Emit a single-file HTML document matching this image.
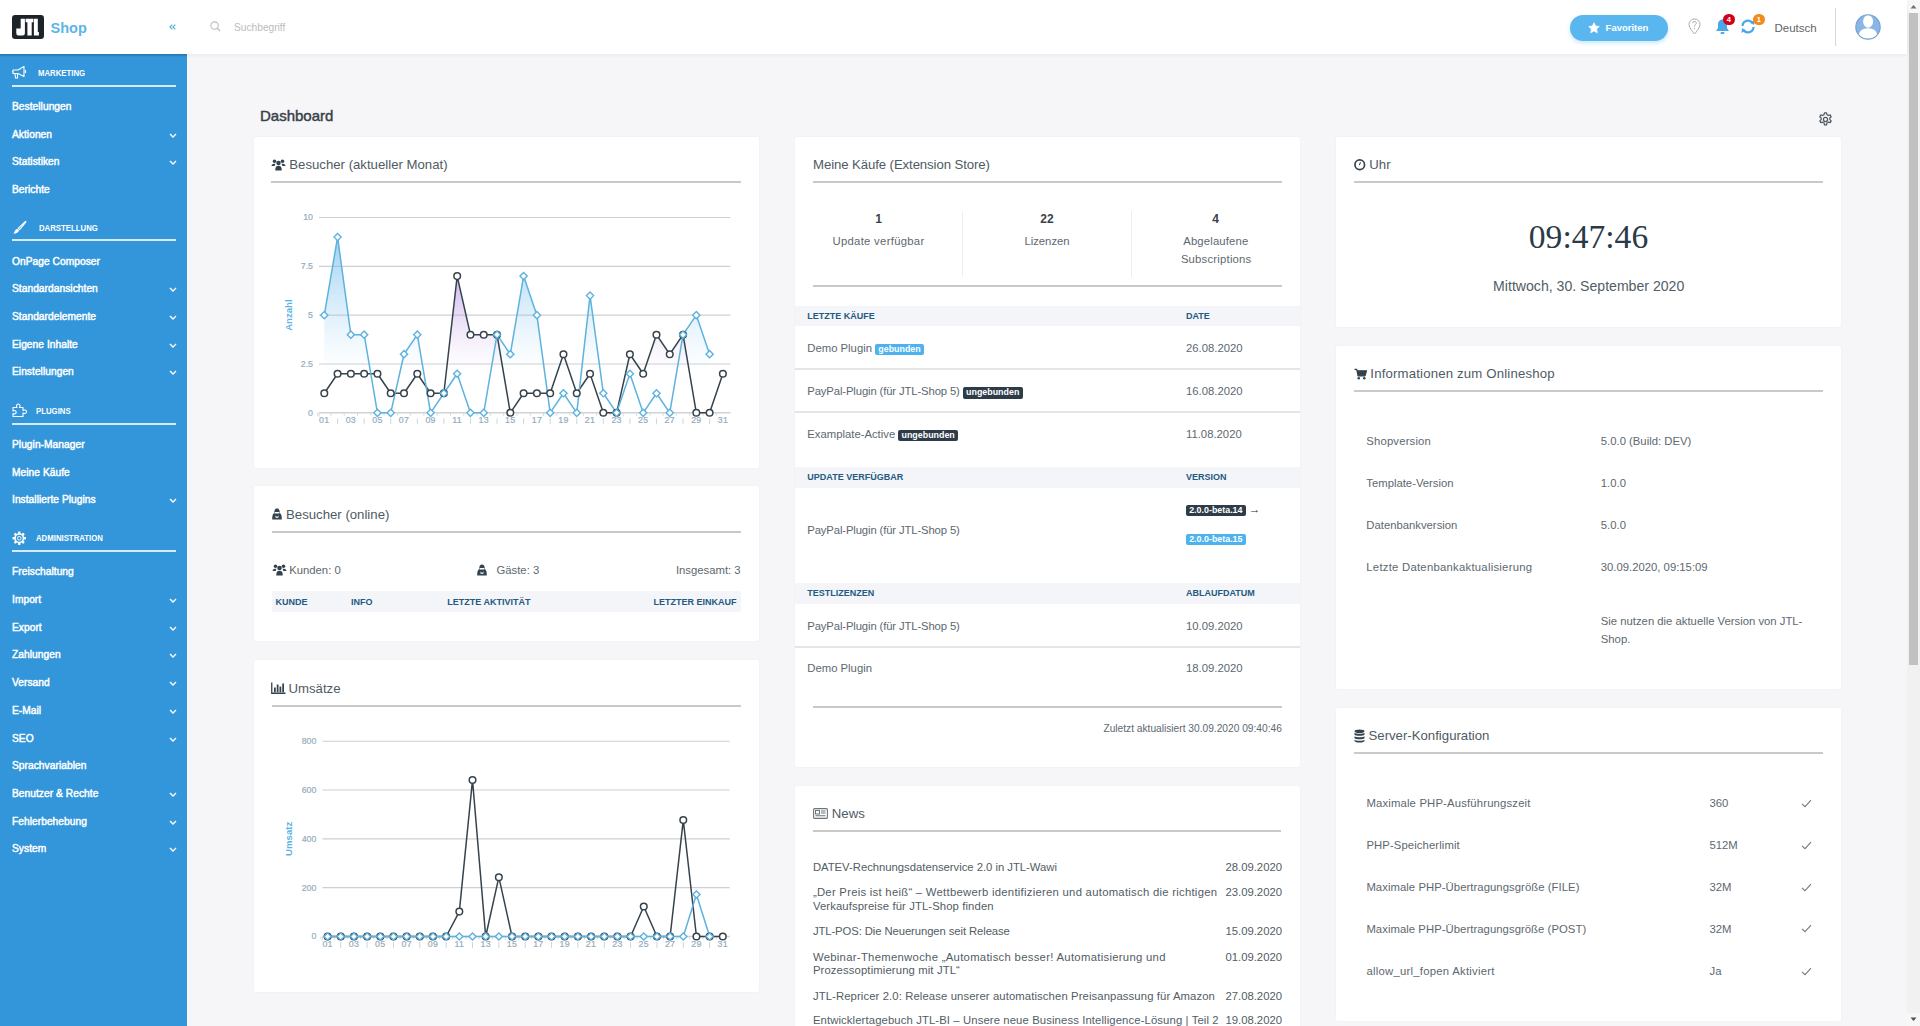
<!DOCTYPE html><html><head><meta charset="utf-8"><title>Dashboard</title><style>
*{margin:0;padding:0;box-sizing:border-box}
html,body{width:1920px;height:1026px;overflow:hidden;background:#f6f6f9;font-family:"Liberation Sans",sans-serif}
.t{position:absolute;white-space:nowrap}
.r{position:absolute}
.sb{color:#fff;font-size:10.2px;-webkit-text-stroke:0.45px #fff;letter-spacing:0.05px}
.sh{color:#fff;font-size:8.8px;font-weight:bold;transform:scaleX(0.885);transform-origin:0 50%}
.ct{color:#4f5b64;font-size:13.2px}
.bt{color:#5d6870;font-size:11.3px}
.th{color:#245a82;font-size:9px;font-weight:bold}
.card{position:absolute;background:#fff;border-radius:2px;box-shadow:0 0 2px rgba(0,0,0,0.06)}
.badge{display:inline-block;color:#fff;font-weight:bold;font-size:8.9px;line-height:11.6px;padding:0 3.2px;border-radius:2px;vertical-align:0px}
svg{position:absolute;overflow:visible}
</style></head><body>
<div class="r" style="left:0px;top:0px;width:1907px;height:54px;background:#fff;box-shadow:0 1px 4px rgba(0,0,0,0.06);z-index:2"></div>
<div style="position:absolute;left:0;top:0;width:1907px;height:54px;z-index:3">
<svg style="left:12px;top:15px" width="32" height="24" viewBox="0 0 32 24"><rect x="0" y="0" width="32" height="24" rx="3.2" fill="#1e2329"/><path d="M8.7 3.7 H12.9 V18.3 Q12.9 20.6 10.6 20.6 H6.4 Q4.3 20.6 4.3 18.3 V13.6 H8.7 Z" fill="#fff"/><path d="M13.6 3.7 H21.4 V7.3 H19.7 V20.6 H15.4 V7.3 H13.6 Z" fill="#fff"/><path d="M21.9 3.7 H25.8 V16.9 H26.9 V20.6 H21.9 Z" fill="#fff"/></svg>
<div class="t " style="left:50.6px;top:17.60px;line-height:20px;color:#5bb5e8;font-weight:bold;font-size:14.5px">Shop</div>
<svg style="left:168.5px;top:24px" width="7" height="6" viewBox="0 0 7 6"><path d="M3.3 0.6 L0.9 3 L3.3 5.4 M6.3 0.6 L3.9 3 L6.3 5.4" fill="none" stroke="#5aaad0" stroke-width="1.1"/></svg>
<svg style="left:209.5px;top:20.8px" width="11" height="11" viewBox="0 0 11 11"><circle cx="4.6" cy="4.6" r="3.7" fill="none" stroke="#bdbdbd" stroke-width="1.1"/><line x1="7.3" y1="7.3" x2="10" y2="10" stroke="#bdbdbd" stroke-width="1.3"/></svg>
<div class="t " style="left:234px;top:18.10px;line-height:20px;color:#bcbcbc;font-size:10.2px">Suchbegriff</div>
<div class="r" style="left:1569.5px;top:14.5px;width:98px;height:26px;border-radius:13px;background:#5ab6ef;box-shadow:0 2px 4px rgba(90,182,239,0.35)"></div>
<svg style="left:1588px;top:21.5px" width="12" height="12" viewBox="0 0 24 24"><path d="M12 1.5l3.2 6.6 7.3 1-5.3 5.1 1.3 7.2L12 18l-6.5 3.4 1.3-7.2L1.5 9.1l7.3-1z" fill="#fff" stroke="#fff" stroke-width="1.5" stroke-linejoin="round"/></svg>
<div class="t " style="left:1605.6px;top:17.60px;line-height:20px;color:#fff;font-size:9.5px;font-weight:bold">Favoriten</div>
<svg style="left:1688px;top:18px" width="13" height="17" viewBox="0 0 13 17"><path d="M6.5 16 C6.5 16 1 10 1 6.5 A5.5 5.5 0 0 1 12 6.5 C12 10 6.5 16 6.5 16Z" fill="none" stroke="#a9a9a9" stroke-width="1"/><path d="M4.7 5.2 A1.8 1.8 0 1 1 7.3 6.8 C6.6 7.2 6.5 7.5 6.5 8.6" fill="none" stroke="#a9a9a9" stroke-width="1"/><circle cx="6.5" cy="10.4" r="0.6" fill="#a9a9a9"/></svg>
<svg style="left:1715px;top:18px" width="15" height="17" viewBox="0 0 15 17"><path d="M7.5 1.5 C4.5 1.5 3 4 3 6.5 L3 10 L1 13 L14 13 L12 10 L12 6.5 C12 4 10.5 1.5 7.5 1.5Z" fill="#4aa8e8"/><rect x="5.5" y="14" width="4" height="2" rx="1" fill="#4aa8e8"/></svg>
<div class="r" style="left:1723px;top:13.6px;width:11.5px;height:11.5px;border-radius:50%;background:#d0021b;color:#fff;font-size:7.5px;font-weight:bold;text-align:center;line-height:11.5px;font-family:Liberation Sans">4</div>
<svg style="left:1740px;top:18px" width="16" height="17" viewBox="0 0 16 17"><path d="M2.5 8 A5.5 5.5 0 0 1 12.5 5" fill="none" stroke="#4aa8e8" stroke-width="2.2"/><path d="M13.5 9 A5.5 5.5 0 0 1 3.5 12" fill="none" stroke="#4aa8e8" stroke-width="2.2"/><path d="M10 4.5 L14.5 2 L14 7 Z" fill="#4aa8e8"/><path d="M6 12.5 L1.5 15 L2 10 Z" fill="#4aa8e8"/></svg>
<div class="r" style="left:1753px;top:13.6px;width:11.5px;height:11.5px;border-radius:50%;background:#f08c1e;color:#fff;font-size:7.5px;font-weight:bold;text-align:center;line-height:11.5px">1</div>
<div class="t " style="left:1774.5px;top:17.90px;line-height:20px;color:#5f6468;font-size:11.5px">Deutsch</div>
<div class="r" style="left:1835px;top:8px;width:1px;height:38px;background:#d5d8dc"></div>
<svg style="left:1854.5px;top:14px" width="26" height="26" viewBox="0 0 26 26"><defs><clipPath id="avc"><circle cx="13" cy="13" r="12.2"/></clipPath></defs><circle cx="13" cy="13" r="12.2" fill="#8ab6e6"/><g clip-path="url(#avc)"><ellipse cx="13.1" cy="7.4" rx="5" ry="6.3" fill="#fff"/><path d="M3.2 24.5 C3.2 17 7.5 14.2 13 14.2 C18.5 14.2 22.8 17 22.8 24.5Z" fill="#fff"/></g><circle cx="13" cy="13" r="12.2" fill="none" stroke="#73a0cf" stroke-width="1.1"/></svg>
</div>
<div class="r" style="left:1907px;top:0px;width:13px;height:1026px;background:#f1f1f1"></div>
<div class="r" style="left:1907px;top:0px;width:13px;height:13px;background:#f7f7f7"></div>
<div class="r" style="left:1907px;top:1013px;width:13px;height:13px;background:#f7f7f7"></div>
<div class="r" style="left:1909px;top:13px;width:9px;height:652px;background:#c1c1c1"></div>
<svg style="left:1907px;top:0" width="13" height="13"><path d="M3.5 8.5 L6.5 5 L9.5 8.5Z" fill="#707070"/></svg>
<svg style="left:1907px;top:1013px" width="13" height="13"><path d="M3.5 4.5 L6.5 8 L9.5 4.5Z" fill="#505050"/></svg>
<div class="r" style="left:0px;top:54px;width:187.3px;height:972px;background:#3396da"></div>
<div class="r" style="left:0px;top:54px;width:187.3px;height:2.5px;background:linear-gradient(rgba(10,70,100,0.35),rgba(10,70,100,0))"></div>
<svg style="left:11px;top:65px" width="16" height="15" viewBox="0 0 16 15"><path d="M2 5 L7 5 L13 1.5 L13 11.5 L7 8.5 L2 8.5 Z" fill="none" stroke="#fff" stroke-width="1.1" stroke-linejoin="round"/><path d="M4 8.5 L4.5 13 L6.5 13 L6.5 8.5" fill="none" stroke="#fff" stroke-width="1.1"/><path d="M14.5 5 L14.5 8" stroke="#fff" stroke-width="1.1"/><path d="M2 6.8 L1 6.8" stroke="#fff" stroke-width="1.1"/></svg>
<div class="t sh" style="left:37.7px;top:62.80px;line-height:20px;">MARKETING</div>
<div class="r" style="left:12px;top:84.7px;width:164px;height:2px;background:rgba(255,255,255,0.8)"></div>
<div class="t sb" style="left:12px;top:96.80px;line-height:20px;">Bestellungen</div>
<div class="t sb" style="left:12px;top:124.52px;line-height:20px;">Aktionen</div>
<svg style="left:168.5px;top:132.52px" width="8" height="5" viewBox="0 0 8 5"><path d="M1 1 L4 4 L7 1" fill="none" stroke="#fff" stroke-width="1.4"/></svg>
<div class="t sb" style="left:12px;top:152.24px;line-height:20px;">Statistiken</div>
<svg style="left:168.5px;top:160.24px" width="8" height="5" viewBox="0 0 8 5"><path d="M1 1 L4 4 L7 1" fill="none" stroke="#fff" stroke-width="1.4"/></svg>
<div class="t sb" style="left:12px;top:179.96px;line-height:20px;">Berichte</div>
<svg style="left:12px;top:220px" width="15" height="15" viewBox="0 0 15 15"><path d="M13.2 1.6 C13.8 1.2 14.2 1.6 13.8 2.2 L7.6 9.6 L6.2 8.4 Z" fill="none" stroke="#fff" stroke-width="1.1" stroke-linejoin="round"/><path d="M5.6 9 L7 10.2 C6.6 12.6 4.6 13.6 1.2 13.6 C2.4 12.4 2.6 11.6 3 10.6 C3.4 9.6 4.4 9 5.6 9Z" fill="#fff"/></svg>
<div class="t sh" style="left:38.5px;top:217.50px;line-height:20px;">DARSTELLUNG</div>
<div class="r" style="left:12px;top:239.4px;width:164px;height:2px;background:rgba(255,255,255,0.8)"></div>
<div class="t sb" style="left:12px;top:251.50px;line-height:20px;">OnPage Composer</div>
<div class="t sb" style="left:12px;top:279.22px;line-height:20px;">Standardansichten</div>
<svg style="left:168.5px;top:287.22px" width="8" height="5" viewBox="0 0 8 5"><path d="M1 1 L4 4 L7 1" fill="none" stroke="#fff" stroke-width="1.4"/></svg>
<div class="t sb" style="left:12px;top:306.94px;line-height:20px;">Standardelemente</div>
<svg style="left:168.5px;top:314.94px" width="8" height="5" viewBox="0 0 8 5"><path d="M1 1 L4 4 L7 1" fill="none" stroke="#fff" stroke-width="1.4"/></svg>
<div class="t sb" style="left:12px;top:334.66px;line-height:20px;">Eigene Inhalte</div>
<svg style="left:168.5px;top:342.66px" width="8" height="5" viewBox="0 0 8 5"><path d="M1 1 L4 4 L7 1" fill="none" stroke="#fff" stroke-width="1.4"/></svg>
<div class="t sb" style="left:12px;top:362.38px;line-height:20px;">Einstellungen</div>
<svg style="left:168.5px;top:370.38px" width="8" height="5" viewBox="0 0 8 5"><path d="M1 1 L4 4 L7 1" fill="none" stroke="#fff" stroke-width="1.4"/></svg>
<svg style="left:11.5px;top:403px" width="16" height="15" viewBox="0 0 16 15"><path d="M1 4.5 L5 4.5 C4 3 4.5 1 6.3 1 C8 1 8.5 3 7.5 4.5 L11 4.5 L11 7.5 C12.5 6.5 14.5 7 14.5 8.8 C14.5 10.5 12.5 11 11 10 L11 13.5 L1 13.5 L1 10.5 C2.5 11.3 4.2 10.7 4.2 9.2 C4.2 7.7 2.5 7 1 8 Z" fill="none" stroke="#fff" stroke-width="1.1" stroke-linejoin="round"/></svg>
<div class="t sh" style="left:36.4px;top:401.00px;line-height:20px;">PLUGINS</div>
<div class="r" style="left:12px;top:422.9px;width:164px;height:2px;background:rgba(255,255,255,0.8)"></div>
<div class="t sb" style="left:12px;top:435.00px;line-height:20px;">Plugin-Manager</div>
<div class="t sb" style="left:12px;top:462.72px;line-height:20px;">Meine Käufe</div>
<div class="t sb" style="left:12px;top:490.44px;line-height:20px;">Installierte Plugins</div>
<svg style="left:168.5px;top:498.44px" width="8" height="5" viewBox="0 0 8 5"><path d="M1 1 L4 4 L7 1" fill="none" stroke="#fff" stroke-width="1.4"/></svg>
<svg style="left:11.5px;top:530.8px" width="14.5" height="14.5" viewBox="0 0 24 24"><g fill="#fff"><circle cx="12" cy="12" r="8.2"/><rect x="10" y="0.8" width="4" height="4.5" rx="1"/><rect x="10" y="18.7" width="4" height="4.5" rx="1"/><rect x="0.8" y="10" width="4.5" height="4" rx="1"/><rect x="18.7" y="10" width="4.5" height="4" rx="1"/><rect x="10" y="0.8" width="4" height="4.5" rx="1" transform="rotate(45 12 12)"/><rect x="10" y="18.7" width="4" height="4.5" rx="1" transform="rotate(45 12 12)"/><rect x="0.8" y="10" width="4.5" height="4" rx="1" transform="rotate(45 12 12)"/><rect x="18.7" y="10" width="4.5" height="4" rx="1" transform="rotate(45 12 12)"/></g><circle cx="12" cy="12" r="5.6" fill="#3396da"/><circle cx="12" cy="12" r="3" fill="none" stroke="#fff" stroke-width="1.6"/></svg>
<div class="t sh" style="left:36.4px;top:528.20px;line-height:20px;">ADMINISTRATION</div>
<div class="r" style="left:12px;top:550.1px;width:164px;height:2px;background:rgba(255,255,255,0.8)"></div>
<div class="t sb" style="left:12px;top:562.20px;line-height:20px;">Freischaltung</div>
<div class="t sb" style="left:12px;top:589.92px;line-height:20px;">Import</div>
<svg style="left:168.5px;top:597.92px" width="8" height="5" viewBox="0 0 8 5"><path d="M1 1 L4 4 L7 1" fill="none" stroke="#fff" stroke-width="1.4"/></svg>
<div class="t sb" style="left:12px;top:617.64px;line-height:20px;">Export</div>
<svg style="left:168.5px;top:625.64px" width="8" height="5" viewBox="0 0 8 5"><path d="M1 1 L4 4 L7 1" fill="none" stroke="#fff" stroke-width="1.4"/></svg>
<div class="t sb" style="left:12px;top:645.36px;line-height:20px;">Zahlungen</div>
<svg style="left:168.5px;top:653.36px" width="8" height="5" viewBox="0 0 8 5"><path d="M1 1 L4 4 L7 1" fill="none" stroke="#fff" stroke-width="1.4"/></svg>
<div class="t sb" style="left:12px;top:673.08px;line-height:20px;">Versand</div>
<svg style="left:168.5px;top:681.08px" width="8" height="5" viewBox="0 0 8 5"><path d="M1 1 L4 4 L7 1" fill="none" stroke="#fff" stroke-width="1.4"/></svg>
<div class="t sb" style="left:12px;top:700.80px;line-height:20px;">E-Mail</div>
<svg style="left:168.5px;top:708.80px" width="8" height="5" viewBox="0 0 8 5"><path d="M1 1 L4 4 L7 1" fill="none" stroke="#fff" stroke-width="1.4"/></svg>
<div class="t sb" style="left:12px;top:728.52px;line-height:20px;">SEO</div>
<svg style="left:168.5px;top:736.52px" width="8" height="5" viewBox="0 0 8 5"><path d="M1 1 L4 4 L7 1" fill="none" stroke="#fff" stroke-width="1.4"/></svg>
<div class="t sb" style="left:12px;top:756.24px;line-height:20px;">Sprachvariablen</div>
<div class="t sb" style="left:12px;top:783.96px;line-height:20px;">Benutzer &amp; Rechte</div>
<svg style="left:168.5px;top:791.96px" width="8" height="5" viewBox="0 0 8 5"><path d="M1 1 L4 4 L7 1" fill="none" stroke="#fff" stroke-width="1.4"/></svg>
<div class="t sb" style="left:12px;top:811.68px;line-height:20px;">Fehlerbehebung</div>
<svg style="left:168.5px;top:819.68px" width="8" height="5" viewBox="0 0 8 5"><path d="M1 1 L4 4 L7 1" fill="none" stroke="#fff" stroke-width="1.4"/></svg>
<div class="t sb" style="left:12px;top:839.40px;line-height:20px;">System</div>
<svg style="left:168.5px;top:847.40px" width="8" height="5" viewBox="0 0 8 5"><path d="M1 1 L4 4 L7 1" fill="none" stroke="#fff" stroke-width="1.4"/></svg>
<div class="t " style="left:260px;top:106.30px;line-height:20px;color:#384148;font-size:15px;-webkit-text-stroke:0.45px #384148">Dashboard</div>
<svg style="left:1818px;top:110.5px" width="15" height="15" viewBox="0 0 24 24"><path d="M10.3 1.5 h3.4 l0.6 2.9 a8 8 0 0 1 2.3 1.3 l2.8-0.9 1.7 2.9-2.2 2 a8 8 0 0 1 0 2.6 l2.2 2-1.7 2.9-2.8-0.9 a8 8 0 0 1-2.3 1.3 l-0.6 2.9 h-3.4 l-0.6-2.9 a8 8 0 0 1-2.3-1.3 l-2.8 0.9-1.7-2.9 2.2-2 a8 8 0 0 1 0-2.6 l-2.2-2 1.7-2.9 2.8 0.9 a8 8 0 0 1 2.3-1.3z" transform="translate(0,1.5)" fill="none" stroke="#4f5b64" stroke-width="2" stroke-linejoin="round"/><circle cx="12" cy="13.5" r="3.3" fill="none" stroke="#4f5b64" stroke-width="2"/></svg>
<div class="card" style="left:253.75px;top:137px;width:505px;height:331.3px"></div>
<div class="card" style="left:253.75px;top:486.3px;width:505px;height:155.2px"></div>
<div class="card" style="left:253.75px;top:660.3px;width:505px;height:332.2px"></div>
<div class="card" style="left:795.4px;top:136.6px;width:504.2px;height:630.2px"></div>
<div class="card" style="left:795.4px;top:785.5px;width:504.2px;height:300px"></div>
<div class="card" style="left:1335.6px;top:136.8px;width:505.4px;height:190.4px"></div>
<div class="card" style="left:1335.6px;top:346.3px;width:505.4px;height:342.8px"></div>
<div class="card" style="left:1335.6px;top:707.9px;width:505.4px;height:312.9px"></div>
<svg style="left:271.2px;top:158.8px" width="15" height="12" viewBox="0 0 30 24"><circle cx="7" cy="4.5" r="3.5" fill="#34424d"/><circle cx="23" cy="4.5" r="3.5" fill="#34424d"/><circle cx="15" cy="8" r="4.5" fill="#34424d"/><path d="M1 15 C1 11 3 9.5 6 9.5 L9 9.5 C8 11 7.5 12 7.5 14 L1 14 Z" fill="#34424d"/><path d="M29 15 C29 11 27 9.5 24 9.5 L21 9.5 C22 11 22.5 12 22.5 14 L29 14 Z" fill="#34424d"/><path d="M8.5 23 C8.5 16 10.5 13.5 15 13.5 C19.5 13.5 21.5 16 21.5 23 Z" fill="#34424d"/></svg>
<div class="t ct" style="left:289.25px;top:155.00px;line-height:20px;">Besucher (aktueller Monat)</div>
<div class="r" style="left:271px;top:181px;width:470px;height:2px;background:#c9c9c9"></div>
<svg style="left:0;top:0" width="1920" height="1026" viewBox="0 0 1920 1026"><defs><linearGradient id="c1b" gradientUnits="userSpaceOnUse" x1="0" y1="217.5" x2="0" y2="369.834"><stop offset="0" stop-color="#55aee6" stop-opacity="0.7"/><stop offset="1" stop-color="#9fd3f5" stop-opacity="0"/></linearGradient><linearGradient id="c1d" gradientUnits="userSpaceOnUse" x1="0" y1="266.32500000000005" x2="0" y2="369.834"><stop offset="0" stop-color="#a57ade" stop-opacity="0.62"/><stop offset="1" stop-color="#d6b8f0" stop-opacity="0"/></linearGradient></defs><line x1="319" y1="217.50" x2="730.4" y2="217.50" stroke="#cdd0d3" stroke-width="1.1"/><text x="313" y="220.40" text-anchor="end" font-size="8.8" fill="#94adbd" stroke="#94adbd" stroke-width="0.2" font-family="Liberation Sans">10</text><line x1="319" y1="266.33" x2="730.4" y2="266.33" stroke="#cdd0d3" stroke-width="1.1"/><text x="313" y="269.23" text-anchor="end" font-size="8.8" fill="#94adbd" stroke="#94adbd" stroke-width="0.2" font-family="Liberation Sans">7.5</text><line x1="319" y1="315.15" x2="730.4" y2="315.15" stroke="#cdd0d3" stroke-width="1.1"/><text x="313" y="318.05" text-anchor="end" font-size="8.8" fill="#94adbd" stroke="#94adbd" stroke-width="0.2" font-family="Liberation Sans">5</text><line x1="319" y1="363.98" x2="730.4" y2="363.98" stroke="#cdd0d3" stroke-width="1.1"/><text x="313" y="366.88" text-anchor="end" font-size="8.8" fill="#94adbd" stroke="#94adbd" stroke-width="0.2" font-family="Liberation Sans">2.5</text><line x1="319" y1="412.80" x2="730.4" y2="412.80" stroke="#cfd3d6" stroke-width="1.6"/><text x="313" y="415.70" text-anchor="end" font-size="8.8" fill="#94adbd" stroke="#94adbd" stroke-width="0.2" font-family="Liberation Sans">0</text><text x="324.30" y="423.30" text-anchor="middle" font-size="8.8" fill="#94adbd" stroke="#94adbd" stroke-width="0.2" font-family="Liberation Sans" letter-spacing="0.3">01</text><line x1="337.59" y1="418.30" x2="337.59" y2="424.30" stroke="#c5d2da" stroke-width="0.9"/><text x="350.87" y="423.30" text-anchor="middle" font-size="8.8" fill="#94adbd" stroke="#94adbd" stroke-width="0.2" font-family="Liberation Sans" letter-spacing="0.3">03</text><line x1="364.16" y1="418.30" x2="364.16" y2="424.30" stroke="#c5d2da" stroke-width="0.9"/><text x="377.45" y="423.30" text-anchor="middle" font-size="8.8" fill="#94adbd" stroke="#94adbd" stroke-width="0.2" font-family="Liberation Sans" letter-spacing="0.3">05</text><line x1="390.73" y1="418.30" x2="390.73" y2="424.30" stroke="#c5d2da" stroke-width="0.9"/><text x="404.02" y="423.30" text-anchor="middle" font-size="8.8" fill="#94adbd" stroke="#94adbd" stroke-width="0.2" font-family="Liberation Sans" letter-spacing="0.3">07</text><line x1="417.31" y1="418.30" x2="417.31" y2="424.30" stroke="#c5d2da" stroke-width="0.9"/><text x="430.59" y="423.30" text-anchor="middle" font-size="8.8" fill="#94adbd" stroke="#94adbd" stroke-width="0.2" font-family="Liberation Sans" letter-spacing="0.3">09</text><line x1="443.88" y1="418.30" x2="443.88" y2="424.30" stroke="#c5d2da" stroke-width="0.9"/><text x="457.17" y="423.30" text-anchor="middle" font-size="8.8" fill="#94adbd" stroke="#94adbd" stroke-width="0.2" font-family="Liberation Sans" letter-spacing="0.3">11</text><line x1="470.45" y1="418.30" x2="470.45" y2="424.30" stroke="#c5d2da" stroke-width="0.9"/><text x="483.74" y="423.30" text-anchor="middle" font-size="8.8" fill="#94adbd" stroke="#94adbd" stroke-width="0.2" font-family="Liberation Sans" letter-spacing="0.3">13</text><line x1="497.03" y1="418.30" x2="497.03" y2="424.30" stroke="#c5d2da" stroke-width="0.9"/><text x="510.31" y="423.30" text-anchor="middle" font-size="8.8" fill="#94adbd" stroke="#94adbd" stroke-width="0.2" font-family="Liberation Sans" letter-spacing="0.3">15</text><line x1="523.60" y1="418.30" x2="523.60" y2="424.30" stroke="#c5d2da" stroke-width="0.9"/><text x="536.89" y="423.30" text-anchor="middle" font-size="8.8" fill="#94adbd" stroke="#94adbd" stroke-width="0.2" font-family="Liberation Sans" letter-spacing="0.3">17</text><line x1="550.17" y1="418.30" x2="550.17" y2="424.30" stroke="#c5d2da" stroke-width="0.9"/><text x="563.46" y="423.30" text-anchor="middle" font-size="8.8" fill="#94adbd" stroke="#94adbd" stroke-width="0.2" font-family="Liberation Sans" letter-spacing="0.3">19</text><line x1="576.75" y1="418.30" x2="576.75" y2="424.30" stroke="#c5d2da" stroke-width="0.9"/><text x="590.03" y="423.30" text-anchor="middle" font-size="8.8" fill="#94adbd" stroke="#94adbd" stroke-width="0.2" font-family="Liberation Sans" letter-spacing="0.3">21</text><line x1="603.32" y1="418.30" x2="603.32" y2="424.30" stroke="#c5d2da" stroke-width="0.9"/><text x="616.61" y="423.30" text-anchor="middle" font-size="8.8" fill="#94adbd" stroke="#94adbd" stroke-width="0.2" font-family="Liberation Sans" letter-spacing="0.3">23</text><line x1="629.89" y1="418.30" x2="629.89" y2="424.30" stroke="#c5d2da" stroke-width="0.9"/><text x="643.18" y="423.30" text-anchor="middle" font-size="8.8" fill="#94adbd" stroke="#94adbd" stroke-width="0.2" font-family="Liberation Sans" letter-spacing="0.3">25</text><line x1="656.47" y1="418.30" x2="656.47" y2="424.30" stroke="#c5d2da" stroke-width="0.9"/><text x="669.75" y="423.30" text-anchor="middle" font-size="8.8" fill="#94adbd" stroke="#94adbd" stroke-width="0.2" font-family="Liberation Sans" letter-spacing="0.3">27</text><line x1="683.04" y1="418.30" x2="683.04" y2="424.30" stroke="#c5d2da" stroke-width="0.9"/><text x="696.33" y="423.30" text-anchor="middle" font-size="8.8" fill="#94adbd" stroke="#94adbd" stroke-width="0.2" font-family="Liberation Sans" letter-spacing="0.3">29</text><line x1="709.61" y1="418.30" x2="709.61" y2="424.30" stroke="#c5d2da" stroke-width="0.9"/><text x="722.90" y="423.30" text-anchor="middle" font-size="8.8" fill="#94adbd" stroke="#94adbd" stroke-width="0.2" font-family="Liberation Sans" letter-spacing="0.3">31</text><line x1="317.66" y1="412.80" x2="317.66" y2="415.80" stroke="#d6dadd" stroke-width="1"/><line x1="330.94" y1="412.80" x2="330.94" y2="415.80" stroke="#d6dadd" stroke-width="1"/><line x1="344.23" y1="412.80" x2="344.23" y2="415.80" stroke="#d6dadd" stroke-width="1"/><line x1="357.52" y1="412.80" x2="357.52" y2="415.80" stroke="#d6dadd" stroke-width="1"/><line x1="370.80" y1="412.80" x2="370.80" y2="415.80" stroke="#d6dadd" stroke-width="1"/><line x1="384.09" y1="412.80" x2="384.09" y2="415.80" stroke="#d6dadd" stroke-width="1"/><line x1="397.38" y1="412.80" x2="397.38" y2="415.80" stroke="#d6dadd" stroke-width="1"/><line x1="410.66" y1="412.80" x2="410.66" y2="415.80" stroke="#d6dadd" stroke-width="1"/><line x1="423.95" y1="412.80" x2="423.95" y2="415.80" stroke="#d6dadd" stroke-width="1"/><line x1="437.24" y1="412.80" x2="437.24" y2="415.80" stroke="#d6dadd" stroke-width="1"/><line x1="450.52" y1="412.80" x2="450.52" y2="415.80" stroke="#d6dadd" stroke-width="1"/><line x1="463.81" y1="412.80" x2="463.81" y2="415.80" stroke="#d6dadd" stroke-width="1"/><line x1="477.10" y1="412.80" x2="477.10" y2="415.80" stroke="#d6dadd" stroke-width="1"/><line x1="490.38" y1="412.80" x2="490.38" y2="415.80" stroke="#d6dadd" stroke-width="1"/><line x1="503.67" y1="412.80" x2="503.67" y2="415.80" stroke="#d6dadd" stroke-width="1"/><line x1="516.96" y1="412.80" x2="516.96" y2="415.80" stroke="#d6dadd" stroke-width="1"/><line x1="530.24" y1="412.80" x2="530.24" y2="415.80" stroke="#d6dadd" stroke-width="1"/><line x1="543.53" y1="412.80" x2="543.53" y2="415.80" stroke="#d6dadd" stroke-width="1"/><line x1="556.82" y1="412.80" x2="556.82" y2="415.80" stroke="#d6dadd" stroke-width="1"/><line x1="570.10" y1="412.80" x2="570.10" y2="415.80" stroke="#d6dadd" stroke-width="1"/><line x1="583.39" y1="412.80" x2="583.39" y2="415.80" stroke="#d6dadd" stroke-width="1"/><line x1="596.68" y1="412.80" x2="596.68" y2="415.80" stroke="#d6dadd" stroke-width="1"/><line x1="609.96" y1="412.80" x2="609.96" y2="415.80" stroke="#d6dadd" stroke-width="1"/><line x1="623.25" y1="412.80" x2="623.25" y2="415.80" stroke="#d6dadd" stroke-width="1"/><line x1="636.54" y1="412.80" x2="636.54" y2="415.80" stroke="#d6dadd" stroke-width="1"/><line x1="649.82" y1="412.80" x2="649.82" y2="415.80" stroke="#d6dadd" stroke-width="1"/><line x1="663.11" y1="412.80" x2="663.11" y2="415.80" stroke="#d6dadd" stroke-width="1"/><line x1="676.40" y1="412.80" x2="676.40" y2="415.80" stroke="#d6dadd" stroke-width="1"/><line x1="689.68" y1="412.80" x2="689.68" y2="415.80" stroke="#d6dadd" stroke-width="1"/><line x1="702.97" y1="412.80" x2="702.97" y2="415.80" stroke="#d6dadd" stroke-width="1"/><line x1="716.26" y1="412.80" x2="716.26" y2="415.80" stroke="#d6dadd" stroke-width="1"/><line x1="319.00" y1="412.80" x2="319.00" y2="416.80" stroke="#d6dadd" stroke-width="1"/><text transform="translate(289.4,315.15) rotate(-90)" text-anchor="middle" font-size="9.6" font-weight="bold" fill="#5eb3e4" font-family="Liberation Sans" y="3">Anzahl</text><path d="M324.30 393.27 L337.59 373.74 L350.87 373.74 L364.16 373.74 L377.45 373.74 L390.73 393.27 L404.02 393.27 L417.31 373.74 L430.59 393.27 L443.88 393.27 L457.17 276.09 L470.45 334.68 L483.74 334.68 L497.03 334.68 L510.31 412.80 L523.60 393.27 L536.89 393.27 L550.17 393.27 L563.46 354.21 L576.75 393.27 L590.03 373.74 L603.32 412.80 L616.61 412.80 L629.89 354.21 L643.18 373.74 L656.47 334.68 L669.75 354.21 L683.04 334.68 L696.33 412.80 L709.61 412.80 L722.90 373.74 L722.90 412.8 L324.30 412.8 Z" fill="url(#c1d)"/><path d="M324.30 315.15 L337.59 237.03 L350.87 334.68 L364.16 334.68 L377.45 412.80 L390.73 412.80 L404.02 354.21 L417.31 334.68 L430.59 412.80 L443.88 393.27 L457.17 373.74 L470.45 412.80 L483.74 412.80 L497.03 334.68 L510.31 354.21 L523.60 276.09 L536.89 315.15 L550.17 412.80 L563.46 393.27 L576.75 412.80 L590.03 295.62 L603.32 393.27 L616.61 412.80 L629.89 373.74 L643.18 412.80 L656.47 393.27 L669.75 412.80 L683.04 334.68 L696.33 315.15 L709.61 354.21 L709.61 412.8 L324.30 412.8 Z" fill="url(#c1b)"/><polyline points="324.30,393.27 337.59,373.74 350.87,373.74 364.16,373.74 377.45,373.74 390.73,393.27 404.02,393.27 417.31,373.74 430.59,393.27 443.88,393.27 457.17,276.09 470.45,334.68 483.74,334.68 497.03,334.68 510.31,412.80 523.60,393.27 536.89,393.27 550.17,393.27 563.46,354.21 576.75,393.27 590.03,373.74 603.32,412.80 616.61,412.80 629.89,354.21 643.18,373.74 656.47,334.68 669.75,354.21 683.04,334.68 696.33,412.80 709.61,412.80 722.90,373.74" fill="none" stroke="#36434c" stroke-width="1.5" stroke-linejoin="round"/><polyline points="324.30,315.15 337.59,237.03 350.87,334.68 364.16,334.68 377.45,412.80 390.73,412.80 404.02,354.21 417.31,334.68 430.59,412.80 443.88,393.27 457.17,373.74 470.45,412.80 483.74,412.80 497.03,334.68 510.31,354.21 523.60,276.09 536.89,315.15 550.17,412.80 563.46,393.27 576.75,412.80 590.03,295.62 603.32,393.27 616.61,412.80 629.89,373.74 643.18,412.80 656.47,393.27 669.75,412.80 683.04,334.68 696.33,315.15 709.61,354.21" fill="none" stroke="#5db2df" stroke-width="1.5" stroke-linejoin="round"/><circle cx="324.30" cy="393.27" r="3.3" fill="#fff" stroke="#36434c" stroke-width="1.5"/><circle cx="337.59" cy="373.74" r="3.3" fill="#fff" stroke="#36434c" stroke-width="1.5"/><circle cx="350.87" cy="373.74" r="3.3" fill="#fff" stroke="#36434c" stroke-width="1.5"/><circle cx="364.16" cy="373.74" r="3.3" fill="#fff" stroke="#36434c" stroke-width="1.5"/><circle cx="377.45" cy="373.74" r="3.3" fill="#fff" stroke="#36434c" stroke-width="1.5"/><circle cx="390.73" cy="393.27" r="3.3" fill="#fff" stroke="#36434c" stroke-width="1.5"/><circle cx="404.02" cy="393.27" r="3.3" fill="#fff" stroke="#36434c" stroke-width="1.5"/><circle cx="417.31" cy="373.74" r="3.3" fill="#fff" stroke="#36434c" stroke-width="1.5"/><circle cx="430.59" cy="393.27" r="3.3" fill="#fff" stroke="#36434c" stroke-width="1.5"/><circle cx="443.88" cy="393.27" r="3.3" fill="#fff" stroke="#36434c" stroke-width="1.5"/><circle cx="457.17" cy="276.09" r="3.3" fill="#fff" stroke="#36434c" stroke-width="1.5"/><circle cx="470.45" cy="334.68" r="3.3" fill="#fff" stroke="#36434c" stroke-width="1.5"/><circle cx="483.74" cy="334.68" r="3.3" fill="#fff" stroke="#36434c" stroke-width="1.5"/><circle cx="497.03" cy="334.68" r="3.3" fill="#fff" stroke="#36434c" stroke-width="1.5"/><circle cx="510.31" cy="412.80" r="3.3" fill="#fff" stroke="#36434c" stroke-width="1.5"/><circle cx="523.60" cy="393.27" r="3.3" fill="#fff" stroke="#36434c" stroke-width="1.5"/><circle cx="536.89" cy="393.27" r="3.3" fill="#fff" stroke="#36434c" stroke-width="1.5"/><circle cx="550.17" cy="393.27" r="3.3" fill="#fff" stroke="#36434c" stroke-width="1.5"/><circle cx="563.46" cy="354.21" r="3.3" fill="#fff" stroke="#36434c" stroke-width="1.5"/><circle cx="576.75" cy="393.27" r="3.3" fill="#fff" stroke="#36434c" stroke-width="1.5"/><circle cx="590.03" cy="373.74" r="3.3" fill="#fff" stroke="#36434c" stroke-width="1.5"/><circle cx="603.32" cy="412.80" r="3.3" fill="#fff" stroke="#36434c" stroke-width="1.5"/><circle cx="616.61" cy="412.80" r="3.3" fill="#fff" stroke="#36434c" stroke-width="1.5"/><circle cx="629.89" cy="354.21" r="3.3" fill="#fff" stroke="#36434c" stroke-width="1.5"/><circle cx="643.18" cy="373.74" r="3.3" fill="#fff" stroke="#36434c" stroke-width="1.5"/><circle cx="656.47" cy="334.68" r="3.3" fill="#fff" stroke="#36434c" stroke-width="1.5"/><circle cx="669.75" cy="354.21" r="3.3" fill="#fff" stroke="#36434c" stroke-width="1.5"/><circle cx="683.04" cy="334.68" r="3.3" fill="#fff" stroke="#36434c" stroke-width="1.5"/><circle cx="696.33" cy="412.80" r="3.3" fill="#fff" stroke="#36434c" stroke-width="1.5"/><circle cx="709.61" cy="412.80" r="3.3" fill="#fff" stroke="#36434c" stroke-width="1.5"/><circle cx="722.90" cy="373.74" r="3.3" fill="#fff" stroke="#36434c" stroke-width="1.5"/><path d="M324.30 311.55 L327.90 315.15 L324.30 318.75 L320.70 315.15 Z" fill="#fff" stroke="#5db2df" stroke-width="1.4"/><path d="M337.59 233.43 L341.19 237.03 L337.59 240.63 L333.99 237.03 Z" fill="#fff" stroke="#5db2df" stroke-width="1.4"/><path d="M350.87 331.08 L354.47 334.68 L350.87 338.28 L347.27 334.68 Z" fill="#fff" stroke="#5db2df" stroke-width="1.4"/><path d="M364.16 331.08 L367.76 334.68 L364.16 338.28 L360.56 334.68 Z" fill="#fff" stroke="#5db2df" stroke-width="1.4"/><path d="M377.45 409.20 L381.05 412.80 L377.45 416.40 L373.85 412.80 Z" fill="#fff" stroke="#5db2df" stroke-width="1.4"/><path d="M390.73 409.20 L394.33 412.80 L390.73 416.40 L387.13 412.80 Z" fill="#fff" stroke="#5db2df" stroke-width="1.4"/><path d="M404.02 350.61 L407.62 354.21 L404.02 357.81 L400.42 354.21 Z" fill="#fff" stroke="#5db2df" stroke-width="1.4"/><path d="M417.31 331.08 L420.91 334.68 L417.31 338.28 L413.71 334.68 Z" fill="#fff" stroke="#5db2df" stroke-width="1.4"/><path d="M430.59 409.20 L434.19 412.80 L430.59 416.40 L426.99 412.80 Z" fill="#fff" stroke="#5db2df" stroke-width="1.4"/><path d="M443.88 389.67 L447.48 393.27 L443.88 396.87 L440.28 393.27 Z" fill="#fff" stroke="#5db2df" stroke-width="1.4"/><path d="M457.17 370.14 L460.77 373.74 L457.17 377.34 L453.57 373.74 Z" fill="#fff" stroke="#5db2df" stroke-width="1.4"/><path d="M470.45 409.20 L474.05 412.80 L470.45 416.40 L466.85 412.80 Z" fill="#fff" stroke="#5db2df" stroke-width="1.4"/><path d="M483.74 409.20 L487.34 412.80 L483.74 416.40 L480.14 412.80 Z" fill="#fff" stroke="#5db2df" stroke-width="1.4"/><path d="M497.03 331.08 L500.63 334.68 L497.03 338.28 L493.43 334.68 Z" fill="#fff" stroke="#5db2df" stroke-width="1.4"/><path d="M510.31 350.61 L513.91 354.21 L510.31 357.81 L506.71 354.21 Z" fill="#fff" stroke="#5db2df" stroke-width="1.4"/><path d="M523.60 272.49 L527.20 276.09 L523.60 279.69 L520.00 276.09 Z" fill="#fff" stroke="#5db2df" stroke-width="1.4"/><path d="M536.89 311.55 L540.49 315.15 L536.89 318.75 L533.29 315.15 Z" fill="#fff" stroke="#5db2df" stroke-width="1.4"/><path d="M550.17 409.20 L553.77 412.80 L550.17 416.40 L546.57 412.80 Z" fill="#fff" stroke="#5db2df" stroke-width="1.4"/><path d="M563.46 389.67 L567.06 393.27 L563.46 396.87 L559.86 393.27 Z" fill="#fff" stroke="#5db2df" stroke-width="1.4"/><path d="M576.75 409.20 L580.35 412.80 L576.75 416.40 L573.15 412.80 Z" fill="#fff" stroke="#5db2df" stroke-width="1.4"/><path d="M590.03 292.02 L593.63 295.62 L590.03 299.22 L586.43 295.62 Z" fill="#fff" stroke="#5db2df" stroke-width="1.4"/><path d="M603.32 389.67 L606.92 393.27 L603.32 396.87 L599.72 393.27 Z" fill="#fff" stroke="#5db2df" stroke-width="1.4"/><path d="M616.61 409.20 L620.21 412.80 L616.61 416.40 L613.01 412.80 Z" fill="#fff" stroke="#5db2df" stroke-width="1.4"/><path d="M629.89 370.14 L633.49 373.74 L629.89 377.34 L626.29 373.74 Z" fill="#fff" stroke="#5db2df" stroke-width="1.4"/><path d="M643.18 409.20 L646.78 412.80 L643.18 416.40 L639.58 412.80 Z" fill="#fff" stroke="#5db2df" stroke-width="1.4"/><path d="M656.47 389.67 L660.07 393.27 L656.47 396.87 L652.87 393.27 Z" fill="#fff" stroke="#5db2df" stroke-width="1.4"/><path d="M669.75 409.20 L673.35 412.80 L669.75 416.40 L666.15 412.80 Z" fill="#fff" stroke="#5db2df" stroke-width="1.4"/><path d="M683.04 331.08 L686.64 334.68 L683.04 338.28 L679.44 334.68 Z" fill="#fff" stroke="#5db2df" stroke-width="1.4"/><path d="M696.33 311.55 L699.93 315.15 L696.33 318.75 L692.73 315.15 Z" fill="#fff" stroke="#5db2df" stroke-width="1.4"/><path d="M709.61 350.61 L713.21 354.21 L709.61 357.81 L706.01 354.21 Z" fill="#fff" stroke="#5db2df" stroke-width="1.4"/></svg>
<svg style="left:271.8px;top:508.4px" width="10" height="12" viewBox="0 0 20 24"><path d="M4.5 9 C4.5 3 6.5 0.8 10 0.8 C13.5 0.8 15.5 3 15.5 9 L16.5 11 C18.8 13 19.6 16 19.6 23.2 L0.4 23.2 C0.4 16 1.2 13 3.5 11 Z" fill="#34424d"/><rect x="5" y="8.2" width="10" height="2.8" rx="1" fill="#fff"/><path d="M7 15.5 L8.5 20 L10 16.8 L11.5 20 L13 15.5" fill="none" stroke="#fff" stroke-width="1.4"/></svg>
<div class="t ct" style="left:286px;top:504.50px;line-height:20px;">Besucher (online)</div>
<div class="r" style="left:271.5px;top:530.5px;width:469.1px;height:2px;background:#c9c9c9"></div>
<svg style="left:271.5px;top:564px" width="15" height="12" viewBox="0 0 30 24"><circle cx="7" cy="4.5" r="3.5" fill="#34424d"/><circle cx="23" cy="4.5" r="3.5" fill="#34424d"/><circle cx="15" cy="8" r="4.5" fill="#34424d"/><path d="M1 15 C1 11 3 9.5 6 9.5 L9 9.5 C8 11 7.5 12 7.5 14 L1 14 Z" fill="#34424d"/><path d="M29 15 C29 11 27 9.5 24 9.5 L21 9.5 C22 11 22.5 12 22.5 14 L29 14 Z" fill="#34424d"/><path d="M8.5 23 C8.5 16 10.5 13.5 15 13.5 C19.5 13.5 21.5 16 21.5 23 Z" fill="#34424d"/></svg>
<div class="t bt" style="left:289.2px;top:559.80px;line-height:20px;">Kunden: 0</div>
<svg style="left:477.2px;top:564px" width="10" height="12" viewBox="0 0 20 24"><path d="M4.5 9 C4.5 3 6.5 0.8 10 0.8 C13.5 0.8 15.5 3 15.5 9 L16.5 11 C18.8 13 19.6 16 19.6 23.2 L0.4 23.2 C0.4 16 1.2 13 3.5 11 Z" fill="#34424d"/><rect x="5" y="8.2" width="10" height="2.8" rx="1" fill="#fff"/><path d="M7 15.5 L8.5 20 L10 16.8 L11.5 20 L13 15.5" fill="none" stroke="#fff" stroke-width="1.4"/></svg>
<div class="t bt" style="left:496.5px;top:559.80px;line-height:20px;">Gäste: 3</div>
<div class="t bt" style="right:1179.4px;top:559.80px;line-height:20px;">Insgesamt: 3</div>
<div class="r" style="left:271.5px;top:591px;width:469px;height:21px;background:#f4f5f8"></div>
<div class="t th" style="left:275.4px;top:591.50px;line-height:20px;">KUNDE</div>
<div class="t th" style="left:351px;top:591.50px;line-height:20px;">INFO</div>
<div class="t th" style="left:447.3px;top:591.50px;line-height:20px;">LETZTE AKTIVITÄT</div>
<div class="t th" style="right:1183.6px;top:591.50px;line-height:20px;">LETZTER EINKAUF</div>
<svg style="left:271px;top:682px" width="15" height="12" viewBox="0 0 30 24"><path d="M1.5 1 L1.5 22.5 L29 22.5" fill="none" stroke="#34424d" stroke-width="2.6"/><rect x="6" y="11" width="3.5" height="9.5" fill="#34424d"/><rect x="11.5" y="5" width="3.5" height="15.5" fill="#34424d"/><rect x="17" y="9" width="3.5" height="11.5" fill="#34424d"/><rect x="22.5" y="3" width="3.5" height="17.5" fill="#34424d"/></svg>
<div class="t ct" style="left:288.5px;top:678.50px;line-height:20px;">Umsätze</div>
<div class="r" style="left:271.5px;top:705px;width:469.1px;height:2px;background:#c9c9c9"></div>
<svg style="left:0;top:0" width="1920" height="1026" viewBox="0 0 1920 1026"><line x1="322.4" y1="741.20" x2="729.8" y2="741.20" stroke="#cdd0d3" stroke-width="1.1"/><text x="316.4" y="744.10" text-anchor="end" font-size="8.8" fill="#94adbd" stroke="#94adbd" stroke-width="0.2" font-family="Liberation Sans">800</text><line x1="322.4" y1="790.03" x2="729.8" y2="790.03" stroke="#cdd0d3" stroke-width="1.1"/><text x="316.4" y="792.93" text-anchor="end" font-size="8.8" fill="#94adbd" stroke="#94adbd" stroke-width="0.2" font-family="Liberation Sans">600</text><line x1="322.4" y1="838.85" x2="729.8" y2="838.85" stroke="#cdd0d3" stroke-width="1.1"/><text x="316.4" y="841.75" text-anchor="end" font-size="8.8" fill="#94adbd" stroke="#94adbd" stroke-width="0.2" font-family="Liberation Sans">400</text><line x1="322.4" y1="887.67" x2="729.8" y2="887.67" stroke="#cdd0d3" stroke-width="1.1"/><text x="316.4" y="890.57" text-anchor="end" font-size="8.8" fill="#94adbd" stroke="#94adbd" stroke-width="0.2" font-family="Liberation Sans">200</text><line x1="322.4" y1="936.50" x2="729.8" y2="936.50" stroke="#cfd3d6" stroke-width="1.6"/><text x="316.4" y="939.40" text-anchor="end" font-size="8.8" fill="#94adbd" stroke="#94adbd" stroke-width="0.2" font-family="Liberation Sans">0</text><text x="327.60" y="947.00" text-anchor="middle" font-size="8.8" fill="#94adbd" stroke="#94adbd" stroke-width="0.2" font-family="Liberation Sans" letter-spacing="0.3">01</text><line x1="340.77" y1="942.00" x2="340.77" y2="948.00" stroke="#c5d2da" stroke-width="0.9"/><text x="353.95" y="947.00" text-anchor="middle" font-size="8.8" fill="#94adbd" stroke="#94adbd" stroke-width="0.2" font-family="Liberation Sans" letter-spacing="0.3">03</text><line x1="367.12" y1="942.00" x2="367.12" y2="948.00" stroke="#c5d2da" stroke-width="0.9"/><text x="380.29" y="947.00" text-anchor="middle" font-size="8.8" fill="#94adbd" stroke="#94adbd" stroke-width="0.2" font-family="Liberation Sans" letter-spacing="0.3">05</text><line x1="393.47" y1="942.00" x2="393.47" y2="948.00" stroke="#c5d2da" stroke-width="0.9"/><text x="406.64" y="947.00" text-anchor="middle" font-size="8.8" fill="#94adbd" stroke="#94adbd" stroke-width="0.2" font-family="Liberation Sans" letter-spacing="0.3">07</text><line x1="419.81" y1="942.00" x2="419.81" y2="948.00" stroke="#c5d2da" stroke-width="0.9"/><text x="432.99" y="947.00" text-anchor="middle" font-size="8.8" fill="#94adbd" stroke="#94adbd" stroke-width="0.2" font-family="Liberation Sans" letter-spacing="0.3">09</text><line x1="446.16" y1="942.00" x2="446.16" y2="948.00" stroke="#c5d2da" stroke-width="0.9"/><text x="459.33" y="947.00" text-anchor="middle" font-size="8.8" fill="#94adbd" stroke="#94adbd" stroke-width="0.2" font-family="Liberation Sans" letter-spacing="0.3">11</text><line x1="472.51" y1="942.00" x2="472.51" y2="948.00" stroke="#c5d2da" stroke-width="0.9"/><text x="485.68" y="947.00" text-anchor="middle" font-size="8.8" fill="#94adbd" stroke="#94adbd" stroke-width="0.2" font-family="Liberation Sans" letter-spacing="0.3">13</text><line x1="498.85" y1="942.00" x2="498.85" y2="948.00" stroke="#c5d2da" stroke-width="0.9"/><text x="512.03" y="947.00" text-anchor="middle" font-size="8.8" fill="#94adbd" stroke="#94adbd" stroke-width="0.2" font-family="Liberation Sans" letter-spacing="0.3">15</text><line x1="525.20" y1="942.00" x2="525.20" y2="948.00" stroke="#c5d2da" stroke-width="0.9"/><text x="538.37" y="947.00" text-anchor="middle" font-size="8.8" fill="#94adbd" stroke="#94adbd" stroke-width="0.2" font-family="Liberation Sans" letter-spacing="0.3">17</text><line x1="551.55" y1="942.00" x2="551.55" y2="948.00" stroke="#c5d2da" stroke-width="0.9"/><text x="564.72" y="947.00" text-anchor="middle" font-size="8.8" fill="#94adbd" stroke="#94adbd" stroke-width="0.2" font-family="Liberation Sans" letter-spacing="0.3">19</text><line x1="577.89" y1="942.00" x2="577.89" y2="948.00" stroke="#c5d2da" stroke-width="0.9"/><text x="591.07" y="947.00" text-anchor="middle" font-size="8.8" fill="#94adbd" stroke="#94adbd" stroke-width="0.2" font-family="Liberation Sans" letter-spacing="0.3">21</text><line x1="604.24" y1="942.00" x2="604.24" y2="948.00" stroke="#c5d2da" stroke-width="0.9"/><text x="617.41" y="947.00" text-anchor="middle" font-size="8.8" fill="#94adbd" stroke="#94adbd" stroke-width="0.2" font-family="Liberation Sans" letter-spacing="0.3">23</text><line x1="630.59" y1="942.00" x2="630.59" y2="948.00" stroke="#c5d2da" stroke-width="0.9"/><text x="643.76" y="947.00" text-anchor="middle" font-size="8.8" fill="#94adbd" stroke="#94adbd" stroke-width="0.2" font-family="Liberation Sans" letter-spacing="0.3">25</text><line x1="656.93" y1="942.00" x2="656.93" y2="948.00" stroke="#c5d2da" stroke-width="0.9"/><text x="670.11" y="947.00" text-anchor="middle" font-size="8.8" fill="#94adbd" stroke="#94adbd" stroke-width="0.2" font-family="Liberation Sans" letter-spacing="0.3">27</text><line x1="683.28" y1="942.00" x2="683.28" y2="948.00" stroke="#c5d2da" stroke-width="0.9"/><text x="696.45" y="947.00" text-anchor="middle" font-size="8.8" fill="#94adbd" stroke="#94adbd" stroke-width="0.2" font-family="Liberation Sans" letter-spacing="0.3">29</text><line x1="709.63" y1="942.00" x2="709.63" y2="948.00" stroke="#c5d2da" stroke-width="0.9"/><text x="722.80" y="947.00" text-anchor="middle" font-size="8.8" fill="#94adbd" stroke="#94adbd" stroke-width="0.2" font-family="Liberation Sans" letter-spacing="0.3">31</text><line x1="321.01" y1="936.50" x2="321.01" y2="939.50" stroke="#d6dadd" stroke-width="1"/><line x1="334.19" y1="936.50" x2="334.19" y2="939.50" stroke="#d6dadd" stroke-width="1"/><line x1="347.36" y1="936.50" x2="347.36" y2="939.50" stroke="#d6dadd" stroke-width="1"/><line x1="360.53" y1="936.50" x2="360.53" y2="939.50" stroke="#d6dadd" stroke-width="1"/><line x1="373.71" y1="936.50" x2="373.71" y2="939.50" stroke="#d6dadd" stroke-width="1"/><line x1="386.88" y1="936.50" x2="386.88" y2="939.50" stroke="#d6dadd" stroke-width="1"/><line x1="400.05" y1="936.50" x2="400.05" y2="939.50" stroke="#d6dadd" stroke-width="1"/><line x1="413.23" y1="936.50" x2="413.23" y2="939.50" stroke="#d6dadd" stroke-width="1"/><line x1="426.40" y1="936.50" x2="426.40" y2="939.50" stroke="#d6dadd" stroke-width="1"/><line x1="439.57" y1="936.50" x2="439.57" y2="939.50" stroke="#d6dadd" stroke-width="1"/><line x1="452.75" y1="936.50" x2="452.75" y2="939.50" stroke="#d6dadd" stroke-width="1"/><line x1="465.92" y1="936.50" x2="465.92" y2="939.50" stroke="#d6dadd" stroke-width="1"/><line x1="479.09" y1="936.50" x2="479.09" y2="939.50" stroke="#d6dadd" stroke-width="1"/><line x1="492.27" y1="936.50" x2="492.27" y2="939.50" stroke="#d6dadd" stroke-width="1"/><line x1="505.44" y1="936.50" x2="505.44" y2="939.50" stroke="#d6dadd" stroke-width="1"/><line x1="518.61" y1="936.50" x2="518.61" y2="939.50" stroke="#d6dadd" stroke-width="1"/><line x1="531.79" y1="936.50" x2="531.79" y2="939.50" stroke="#d6dadd" stroke-width="1"/><line x1="544.96" y1="936.50" x2="544.96" y2="939.50" stroke="#d6dadd" stroke-width="1"/><line x1="558.13" y1="936.50" x2="558.13" y2="939.50" stroke="#d6dadd" stroke-width="1"/><line x1="571.31" y1="936.50" x2="571.31" y2="939.50" stroke="#d6dadd" stroke-width="1"/><line x1="584.48" y1="936.50" x2="584.48" y2="939.50" stroke="#d6dadd" stroke-width="1"/><line x1="597.65" y1="936.50" x2="597.65" y2="939.50" stroke="#d6dadd" stroke-width="1"/><line x1="610.83" y1="936.50" x2="610.83" y2="939.50" stroke="#d6dadd" stroke-width="1"/><line x1="624.00" y1="936.50" x2="624.00" y2="939.50" stroke="#d6dadd" stroke-width="1"/><line x1="637.17" y1="936.50" x2="637.17" y2="939.50" stroke="#d6dadd" stroke-width="1"/><line x1="650.35" y1="936.50" x2="650.35" y2="939.50" stroke="#d6dadd" stroke-width="1"/><line x1="663.52" y1="936.50" x2="663.52" y2="939.50" stroke="#d6dadd" stroke-width="1"/><line x1="676.69" y1="936.50" x2="676.69" y2="939.50" stroke="#d6dadd" stroke-width="1"/><line x1="689.87" y1="936.50" x2="689.87" y2="939.50" stroke="#d6dadd" stroke-width="1"/><line x1="703.04" y1="936.50" x2="703.04" y2="939.50" stroke="#d6dadd" stroke-width="1"/><line x1="716.21" y1="936.50" x2="716.21" y2="939.50" stroke="#d6dadd" stroke-width="1"/><line x1="322.40" y1="936.50" x2="322.40" y2="940.50" stroke="#d6dadd" stroke-width="1"/><text transform="translate(289,838.85) rotate(-90)" text-anchor="middle" font-size="9.6" font-weight="bold" fill="#5eb3e4" font-family="Liberation Sans" y="3">Umsatz</text><polyline points="327.60,936.50 340.77,936.50 353.95,936.50 367.12,936.50 380.29,936.50 393.47,936.50 406.64,936.50 419.81,936.50 432.99,936.50 446.16,936.50 459.33,911.60 472.51,780.02 485.68,936.50 498.85,877.18 512.03,936.50 525.20,936.50 538.37,936.50 551.55,936.50 564.72,936.50 577.89,936.50 591.07,936.50 604.24,936.50 617.41,936.50 630.59,936.50 643.76,906.47 656.93,936.50 670.11,936.50 683.28,820.05 696.45,936.50 709.63,936.50 722.80,936.50" fill="none" stroke="#36434c" stroke-width="1.5" stroke-linejoin="round"/><polyline points="327.60,936.50 340.77,936.50 353.95,936.50 367.12,936.50 380.29,936.50 393.47,936.50 406.64,936.50 419.81,936.50 432.99,936.50 446.16,936.50 459.33,936.50 472.51,936.50 485.68,936.50 498.85,936.50 512.03,936.50 525.20,936.50 538.37,936.50 551.55,936.50 564.72,936.50 577.89,936.50 591.07,936.50 604.24,936.50 617.41,936.50 630.59,936.50 643.76,936.50 656.93,936.50 670.11,936.50 683.28,936.50 696.45,894.51 709.63,936.50" fill="none" stroke="#5db2df" stroke-width="1.5" stroke-linejoin="round"/><circle cx="327.60" cy="936.50" r="3.3" fill="#fff" stroke="#36434c" stroke-width="1.5"/><circle cx="340.77" cy="936.50" r="3.3" fill="#fff" stroke="#36434c" stroke-width="1.5"/><circle cx="353.95" cy="936.50" r="3.3" fill="#fff" stroke="#36434c" stroke-width="1.5"/><circle cx="367.12" cy="936.50" r="3.3" fill="#fff" stroke="#36434c" stroke-width="1.5"/><circle cx="380.29" cy="936.50" r="3.3" fill="#fff" stroke="#36434c" stroke-width="1.5"/><circle cx="393.47" cy="936.50" r="3.3" fill="#fff" stroke="#36434c" stroke-width="1.5"/><circle cx="406.64" cy="936.50" r="3.3" fill="#fff" stroke="#36434c" stroke-width="1.5"/><circle cx="419.81" cy="936.50" r="3.3" fill="#fff" stroke="#36434c" stroke-width="1.5"/><circle cx="432.99" cy="936.50" r="3.3" fill="#fff" stroke="#36434c" stroke-width="1.5"/><circle cx="446.16" cy="936.50" r="3.3" fill="#fff" stroke="#36434c" stroke-width="1.5"/><circle cx="459.33" cy="911.60" r="3.3" fill="#fff" stroke="#36434c" stroke-width="1.5"/><circle cx="472.51" cy="780.02" r="3.3" fill="#fff" stroke="#36434c" stroke-width="1.5"/><circle cx="485.68" cy="936.50" r="3.3" fill="#fff" stroke="#36434c" stroke-width="1.5"/><circle cx="498.85" cy="877.18" r="3.3" fill="#fff" stroke="#36434c" stroke-width="1.5"/><circle cx="512.03" cy="936.50" r="3.3" fill="#fff" stroke="#36434c" stroke-width="1.5"/><circle cx="525.20" cy="936.50" r="3.3" fill="#fff" stroke="#36434c" stroke-width="1.5"/><circle cx="538.37" cy="936.50" r="3.3" fill="#fff" stroke="#36434c" stroke-width="1.5"/><circle cx="551.55" cy="936.50" r="3.3" fill="#fff" stroke="#36434c" stroke-width="1.5"/><circle cx="564.72" cy="936.50" r="3.3" fill="#fff" stroke="#36434c" stroke-width="1.5"/><circle cx="577.89" cy="936.50" r="3.3" fill="#fff" stroke="#36434c" stroke-width="1.5"/><circle cx="591.07" cy="936.50" r="3.3" fill="#fff" stroke="#36434c" stroke-width="1.5"/><circle cx="604.24" cy="936.50" r="3.3" fill="#fff" stroke="#36434c" stroke-width="1.5"/><circle cx="617.41" cy="936.50" r="3.3" fill="#fff" stroke="#36434c" stroke-width="1.5"/><circle cx="630.59" cy="936.50" r="3.3" fill="#fff" stroke="#36434c" stroke-width="1.5"/><circle cx="643.76" cy="906.47" r="3.3" fill="#fff" stroke="#36434c" stroke-width="1.5"/><circle cx="656.93" cy="936.50" r="3.3" fill="#fff" stroke="#36434c" stroke-width="1.5"/><circle cx="670.11" cy="936.50" r="3.3" fill="#fff" stroke="#36434c" stroke-width="1.5"/><circle cx="683.28" cy="820.05" r="3.3" fill="#fff" stroke="#36434c" stroke-width="1.5"/><circle cx="696.45" cy="936.50" r="3.3" fill="#fff" stroke="#36434c" stroke-width="1.5"/><circle cx="709.63" cy="936.50" r="3.3" fill="#fff" stroke="#36434c" stroke-width="1.5"/><circle cx="722.80" cy="936.50" r="3.3" fill="#fff" stroke="#36434c" stroke-width="1.5"/><path d="M327.60 932.90 L331.20 936.50 L327.60 940.10 L324.00 936.50 Z" fill="#fff" stroke="#5db2df" stroke-width="1.4"/><path d="M340.77 932.90 L344.37 936.50 L340.77 940.10 L337.17 936.50 Z" fill="#fff" stroke="#5db2df" stroke-width="1.4"/><path d="M353.95 932.90 L357.55 936.50 L353.95 940.10 L350.35 936.50 Z" fill="#fff" stroke="#5db2df" stroke-width="1.4"/><path d="M367.12 932.90 L370.72 936.50 L367.12 940.10 L363.52 936.50 Z" fill="#fff" stroke="#5db2df" stroke-width="1.4"/><path d="M380.29 932.90 L383.89 936.50 L380.29 940.10 L376.69 936.50 Z" fill="#fff" stroke="#5db2df" stroke-width="1.4"/><path d="M393.47 932.90 L397.07 936.50 L393.47 940.10 L389.87 936.50 Z" fill="#fff" stroke="#5db2df" stroke-width="1.4"/><path d="M406.64 932.90 L410.24 936.50 L406.64 940.10 L403.04 936.50 Z" fill="#fff" stroke="#5db2df" stroke-width="1.4"/><path d="M419.81 932.90 L423.41 936.50 L419.81 940.10 L416.21 936.50 Z" fill="#fff" stroke="#5db2df" stroke-width="1.4"/><path d="M432.99 932.90 L436.59 936.50 L432.99 940.10 L429.39 936.50 Z" fill="#fff" stroke="#5db2df" stroke-width="1.4"/><path d="M446.16 932.90 L449.76 936.50 L446.16 940.10 L442.56 936.50 Z" fill="#fff" stroke="#5db2df" stroke-width="1.4"/><path d="M459.33 932.90 L462.93 936.50 L459.33 940.10 L455.73 936.50 Z" fill="#fff" stroke="#5db2df" stroke-width="1.4"/><path d="M472.51 932.90 L476.11 936.50 L472.51 940.10 L468.91 936.50 Z" fill="#fff" stroke="#5db2df" stroke-width="1.4"/><path d="M485.68 932.90 L489.28 936.50 L485.68 940.10 L482.08 936.50 Z" fill="#fff" stroke="#5db2df" stroke-width="1.4"/><path d="M498.85 932.90 L502.45 936.50 L498.85 940.10 L495.25 936.50 Z" fill="#fff" stroke="#5db2df" stroke-width="1.4"/><path d="M512.03 932.90 L515.63 936.50 L512.03 940.10 L508.43 936.50 Z" fill="#fff" stroke="#5db2df" stroke-width="1.4"/><path d="M525.20 932.90 L528.80 936.50 L525.20 940.10 L521.60 936.50 Z" fill="#fff" stroke="#5db2df" stroke-width="1.4"/><path d="M538.37 932.90 L541.97 936.50 L538.37 940.10 L534.77 936.50 Z" fill="#fff" stroke="#5db2df" stroke-width="1.4"/><path d="M551.55 932.90 L555.15 936.50 L551.55 940.10 L547.95 936.50 Z" fill="#fff" stroke="#5db2df" stroke-width="1.4"/><path d="M564.72 932.90 L568.32 936.50 L564.72 940.10 L561.12 936.50 Z" fill="#fff" stroke="#5db2df" stroke-width="1.4"/><path d="M577.89 932.90 L581.49 936.50 L577.89 940.10 L574.29 936.50 Z" fill="#fff" stroke="#5db2df" stroke-width="1.4"/><path d="M591.07 932.90 L594.67 936.50 L591.07 940.10 L587.47 936.50 Z" fill="#fff" stroke="#5db2df" stroke-width="1.4"/><path d="M604.24 932.90 L607.84 936.50 L604.24 940.10 L600.64 936.50 Z" fill="#fff" stroke="#5db2df" stroke-width="1.4"/><path d="M617.41 932.90 L621.01 936.50 L617.41 940.10 L613.81 936.50 Z" fill="#fff" stroke="#5db2df" stroke-width="1.4"/><path d="M630.59 932.90 L634.19 936.50 L630.59 940.10 L626.99 936.50 Z" fill="#fff" stroke="#5db2df" stroke-width="1.4"/><path d="M643.76 932.90 L647.36 936.50 L643.76 940.10 L640.16 936.50 Z" fill="#fff" stroke="#5db2df" stroke-width="1.4"/><path d="M656.93 932.90 L660.53 936.50 L656.93 940.10 L653.33 936.50 Z" fill="#fff" stroke="#5db2df" stroke-width="1.4"/><path d="M670.11 932.90 L673.71 936.50 L670.11 940.10 L666.51 936.50 Z" fill="#fff" stroke="#5db2df" stroke-width="1.4"/><path d="M683.28 932.90 L686.88 936.50 L683.28 940.10 L679.68 936.50 Z" fill="#fff" stroke="#5db2df" stroke-width="1.4"/><path d="M696.45 890.91 L700.05 894.51 L696.45 898.11 L692.85 894.51 Z" fill="#fff" stroke="#5db2df" stroke-width="1.4"/><path d="M709.63 932.90 L713.23 936.50 L709.63 940.10 L706.03 936.50 Z" fill="#fff" stroke="#5db2df" stroke-width="1.4"/></svg>
<div id="m0" class="t ct" style="left:813.1px;top:154.70px;line-height:20px;letter-spacing:-0.101px;">Meine Käufe (Extension Store)</div>
<div class="r" style="left:813px;top:180.5px;width:468.5px;height:2px;background:#c9c9c9"></div>
<div class="t " style="left:728.5px;width:300px;text-align:center;top:209.20px;line-height:20px;color:#3a4249;font-size:12px;font-weight:bold">1</div>
<div id="m1" class="t bt" style="left:728.5px;width:300px;text-align:center;top:231.10px;line-height:20px;letter-spacing:0.294px;">Update verfügbar</div>
<div class="t " style="left:897.0px;width:300px;text-align:center;top:209.20px;line-height:20px;color:#3a4249;font-size:12px;font-weight:bold">22</div>
<div class="t bt" style="left:897.0px;width:300px;text-align:center;top:231.10px;line-height:20px;">Lizenzen</div>
<div class="t " style="left:1065.5px;width:300px;text-align:center;top:209.20px;line-height:20px;color:#3a4249;font-size:12px;font-weight:bold">4</div>
<div id="m2" class="t bt" style="left:1065.8px;width:300px;text-align:center;top:231.10px;line-height:20px;letter-spacing:0.150px;">Abgelaufene</div>
<div id="m3" class="t bt" style="left:1066.2px;width:300px;text-align:center;top:249.20px;line-height:20px;letter-spacing:0.214px;">Subscriptions</div>
<div class="r" style="left:962px;top:211px;width:1px;height:66px;background:#eceef0"></div>
<div class="r" style="left:1131px;top:211px;width:1px;height:66px;background:#eceef0"></div>
<div class="r" style="left:813px;top:285.2px;width:468.5px;height:2px;background:#c9c9c9"></div>
<div class="r" style="left:795.4px;top:306px;width:504.2px;height:20.399999999999977px;background:#f4f5f8"></div>
<div class="t th" style="left:807.3px;top:305.80px;line-height:20px;">LETZTE KÄUFE</div>
<div class="t th" style="left:1186px;top:305.80px;line-height:20px;">DATE</div>
<div class="t bt" style="left:807.3px;top:337.90px;line-height:20px;">Demo Plugin <span class="badge" style="background:#4cb3ee">gebunden</span></div>
<div class="t bt" style="left:1186px;top:337.90px;line-height:20px;">26.08.2020</div>
<div class="r" style="left:795.4px;top:368.0px;width:504.2px;height:2px;background:#e3e5e8"></div>
<div class="t bt" style="left:807.3px;top:381.20px;line-height:20px;"><span id="pp1" style="letter-spacing:-0.13px">PayPal-Plugin (für JTL-Shop 5)</span> <span class="badge" style="background:#2e3c49">ungebunden</span></div>
<div class="t bt" style="left:1186px;top:381.20px;line-height:20px;">16.08.2020</div>
<div class="r" style="left:795.4px;top:411px;width:504.2px;height:2px;background:#e3e5e8"></div>
<div class="t bt" style="left:807.3px;top:423.50px;line-height:20px;">Examplate-Active <span class="badge" style="background:#2e3c49">ungebunden</span></div>
<div class="t bt" style="left:1186px;top:423.50px;line-height:20px;">11.08.2020</div>
<div class="r" style="left:795.4px;top:466.7px;width:504.2px;height:21.30000000000001px;background:#f4f5f8"></div>
<div class="t th" style="left:807.3px;top:466.90px;line-height:20px;">UPDATE VERFÜGBAR</div>
<div class="t th" style="left:1186px;top:466.90px;line-height:20px;">VERSION</div>
<div id="m4" class="t bt" style="left:807.3px;top:519.80px;line-height:20px;letter-spacing:-0.132px;">PayPal-Plugin (für JTL-Shop 5)</div>
<div class="t " style="left:1186px;top:498.60px;line-height:20px;font-size:11px"><span class="badge" style="background:#2e3c49;vertical-align:0">2.0.0-beta.14</span> <span style="color:#2a3238;font-size:11.5px;font-weight:bold">&#8594;</span></div>
<div class="t " style="left:1186px;top:527.60px;line-height:20px;font-size:11px"><span class="badge" style="background:#4cb3ee;vertical-align:0">2.0.0-beta.15</span></div>
<div class="r" style="left:795.4px;top:582.5px;width:504.2px;height:21.200000000000045px;background:#f4f5f8"></div>
<div class="t th" style="left:807.3px;top:583.00px;line-height:20px;">TESTLIZENZEN</div>
<div class="t th" style="left:1186px;top:583.00px;line-height:20px;">ABLAUFDATUM</div>
<div id="m5" class="t bt" style="left:807.3px;top:615.60px;line-height:20px;letter-spacing:-0.132px;">PayPal-Plugin (für JTL-Shop 5)</div>
<div class="t bt" style="left:1186px;top:615.60px;line-height:20px;">10.09.2020</div>
<div class="r" style="left:795.4px;top:645.5px;width:504.2px;height:2px;background:#e3e5e8"></div>
<div class="t bt" style="left:807.3px;top:658.10px;line-height:20px;">Demo Plugin</div>
<div class="t bt" style="left:1186px;top:658.10px;line-height:20px;">18.09.2020</div>
<div class="r" style="left:812.8px;top:705.5px;width:469.0px;height:2px;background:#c9c9c9"></div>
<div class="t " style="right:638.2px;top:719.20px;line-height:20px;color:#5d6870;font-size:10.2px">Zuletzt aktualisiert 30.09.2020 09:40:46</div>
<svg style="left:813px;top:808px" width="15" height="11" viewBox="0 0 30 22"><rect x="1.2" y="1.2" width="27.6" height="19.6" rx="2" fill="none" stroke="#6a757c" stroke-width="2.2"/><rect x="5" y="5" width="8" height="7" fill="none" stroke="#6a757c" stroke-width="2"/><path d="M16 6 L25 6 M16 10 L25 10 M5 15.5 L25 15.5" stroke="#6a757c" stroke-width="2"/></svg>
<div class="t ct" style="left:831.8px;top:803.60px;line-height:20px;">News</div>
<div class="r" style="left:812.9px;top:829.5px;width:468.5000000000001px;height:2px;background:#c9c9c9"></div>
<div id="m6" class="t bt" style="left:812.9px;top:860.00px;line-height:14px;letter-spacing:-0.018px;color:#525d65">DATEV-Rechnungsdatenservice 2.0 in JTL-Wawi</div>
<div class="t bt" style="right:638px;top:860.00px;line-height:14px;color:#525d65">28.09.2020</div>
<div id="m7" class="t bt" style="left:812.9px;top:885.30px;line-height:14px;letter-spacing:0.269px;color:#525d65">„Der Preis ist heiß“ – Wettbewerb identifizieren und automatisch die richtigen</div>
<div id="m8" class="t bt" style="left:812.9px;top:898.90px;line-height:14px;letter-spacing:0.109px;color:#525d65">Verkaufspreise für JTL-Shop finden</div>
<div class="t bt" style="right:638px;top:885.30px;line-height:14px;color:#525d65">23.09.2020</div>
<div id="m9" class="t bt" style="left:812.9px;top:924.10px;line-height:14px;letter-spacing:-0.095px;color:#525d65">JTL-POS: Die Neuerungen seit Release</div>
<div class="t bt" style="right:638px;top:924.10px;line-height:14px;color:#525d65">15.09.2020</div>
<div id="m10" class="t bt" style="left:812.9px;top:949.50px;line-height:14px;letter-spacing:0.296px;color:#525d65">Webinar-Themenwoche „Automatisch besser! Automatisierung und</div>
<div id="m11" class="t bt" style="left:812.9px;top:963.10px;line-height:14px;letter-spacing:0.123px;color:#525d65">Prozessoptimierung mit JTL“</div>
<div class="t bt" style="right:638px;top:949.50px;line-height:14px;color:#525d65">01.09.2020</div>
<div id="m12" class="t bt" style="left:812.9px;top:988.50px;line-height:14px;letter-spacing:0.106px;color:#525d65">JTL-Repricer 2.0: Release unserer automatischen Preisanpassung für Amazon</div>
<div class="t bt" style="right:638px;top:988.50px;line-height:14px;color:#525d65">27.08.2020</div>
<div id="m13" class="t bt" style="left:812.9px;top:1013.30px;line-height:14px;letter-spacing:0.113px;color:#525d65">Entwicklertagebuch JTL-BI – Unsere neue Business Intelligence-Lösung | Teil 2</div>
<div class="t bt" style="right:638px;top:1013.30px;line-height:14px;color:#525d65">19.08.2020</div>
<svg style="left:1353.6px;top:158.9px" width="11.5" height="11.5" viewBox="0 0 24 24"><circle cx="12" cy="12" r="10" fill="none" stroke="#3a454d" stroke-width="3.6"/><path d="M13.2 7.5 L11.5 12" fill="none" stroke="#3a454d" stroke-width="2.2" stroke-linecap="round"/></svg>
<div class="t ct" style="left:1369.3px;top:154.60px;line-height:20px;">Uhr</div>
<div class="r" style="left:1353.8px;top:180.5px;width:469.4000000000001px;height:2px;background:#c9c9c9"></div>
<div class="t " style="left:1438.5px;width:300px;text-align:center;top:216.50px;line-height:40px;color:#2b3a47;font-family:'Liberation Serif',serif;font-size:33.6px">09:47:46</div>
<div class="t " style="left:1438.7px;width:300px;text-align:center;top:276.40px;line-height:20px;color:#525d65;font-size:14.1px">Mittwoch, 30. September 2020</div>
<svg style="left:1353.8px;top:368px" width="13" height="12" viewBox="0 0 26 24"><path d="M1 2.5 L5.5 2.5 L8 15.5 L22 15.5 L25 5.5 L6.5 5.5" fill="#34424d" stroke="#34424d" stroke-width="2.5" stroke-linejoin="round"/><circle cx="9.5" cy="20.5" r="2.5" fill="#34424d"/><circle cx="20.5" cy="20.5" r="2.5" fill="#34424d"/></svg>
<div id="m14" class="t ct" style="left:1370.3px;top:364.10px;line-height:20px;letter-spacing:0.175px;">Informationen zum Onlineshop</div>
<div class="r" style="left:1353.8px;top:389.8px;width:469.4000000000001px;height:2px;background:#c9c9c9"></div>
<div id="m15" class="t bt" style="left:1366.3px;top:430.80px;line-height:20px;letter-spacing:0.173px;">Shopversion</div>
<div class="t bt" style="left:1600.8px;top:430.80px;line-height:20px;">5.0.0 (Build: DEV)</div>
<div class="t bt" style="left:1366.3px;top:473.30px;line-height:20px;">Template-Version</div>
<div class="t bt" style="left:1600.8px;top:473.30px;line-height:20px;">1.0.0</div>
<div class="t bt" style="left:1366.3px;top:515.10px;line-height:20px;">Datenbankversion</div>
<div class="t bt" style="left:1600.8px;top:515.10px;line-height:20px;">5.0.0</div>
<div id="m16" class="t bt" style="left:1366.3px;top:556.90px;line-height:20px;letter-spacing:0.258px;">Letzte Datenbankaktualisierung</div>
<div class="t bt" style="left:1600.8px;top:556.90px;line-height:20px;">30.09.2020, 09:15:09</div>
<div class="t bt" style="left:1600.8px;top:610.90px;line-height:20px;">Sie nutzen die aktuelle Version von JTL-</div>
<div class="t bt" style="left:1600.8px;top:629.30px;line-height:20px;">Shop.</div>
<svg style="left:1354px;top:728.5px" width="11" height="14" viewBox="0 0 22 28"><ellipse cx="11" cy="4.5" rx="10" ry="3.5" fill="#34424d"/><path d="M1 7.5 C3 10 19 10 21 7.5 L21 11.5 C19 14 3 14 1 11.5Z" fill="#34424d"/><path d="M1 14.5 C3 17 19 17 21 14.5 L21 18.5 C19 21 3 21 1 18.5Z" fill="#34424d"/><path d="M1 21.5 C3 24 19 24 21 21.5 L21 24 C19 28 3 28 1 24Z" fill="#34424d"/></svg>
<div class="t ct" style="left:1368.5px;top:725.90px;line-height:20px;">Server-Konfiguration</div>
<div class="r" style="left:1353.8px;top:751.5px;width:469.4000000000001px;height:2px;background:#c9c9c9"></div>
<div id="m17" class="t bt" style="left:1366.4px;top:793.20px;line-height:20px;letter-spacing:0.168px;">Maximale PHP-Ausführungszeit</div>
<div class="t bt" style="left:1709.5px;top:793.20px;line-height:20px;">360</div>
<svg style="left:1800.5px;top:798.7px" width="11" height="9" viewBox="0 0 11 9"><path d="M1 4.8 L4 7.6 L10 1.2" fill="none" stroke="#707b82" stroke-width="1.1"/></svg>
<div id="m18" class="t bt" style="left:1366.4px;top:835.20px;line-height:20px;letter-spacing:0.102px;">PHP-Speicherlimit</div>
<div class="t bt" style="left:1709.5px;top:835.20px;line-height:20px;">512M</div>
<svg style="left:1800.5px;top:840.7px" width="11" height="9" viewBox="0 0 11 9"><path d="M1 4.8 L4 7.6 L10 1.2" fill="none" stroke="#707b82" stroke-width="1.1"/></svg>
<div id="m19" class="t bt" style="left:1366.4px;top:877.10px;line-height:20px;letter-spacing:0.058px;">Maximale PHP-Übertragungsgröße (FILE)</div>
<div class="t bt" style="left:1709.5px;top:877.10px;line-height:20px;">32M</div>
<svg style="left:1800.5px;top:882.6px" width="11" height="9" viewBox="0 0 11 9"><path d="M1 4.8 L4 7.6 L10 1.2" fill="none" stroke="#707b82" stroke-width="1.1"/></svg>
<div id="m20" class="t bt" style="left:1366.4px;top:918.70px;line-height:20px;letter-spacing:0.053px;">Maximale PHP-Übertragungsgröße (POST)</div>
<div class="t bt" style="left:1709.5px;top:918.70px;line-height:20px;">32M</div>
<svg style="left:1800.5px;top:924.2px" width="11" height="9" viewBox="0 0 11 9"><path d="M1 4.8 L4 7.6 L10 1.2" fill="none" stroke="#707b82" stroke-width="1.1"/></svg>
<div id="m21" class="t bt" style="left:1366.4px;top:961.00px;line-height:20px;letter-spacing:0.259px;">allow_url_fopen Aktiviert</div>
<div class="t bt" style="left:1709.5px;top:961.00px;line-height:20px;">Ja</div>
<svg style="left:1800.5px;top:966.5px" width="11" height="9" viewBox="0 0 11 9"><path d="M1 4.8 L4 7.6 L10 1.2" fill="none" stroke="#707b82" stroke-width="1.1"/></svg>
<!--CONTENT-->
</body></html>
